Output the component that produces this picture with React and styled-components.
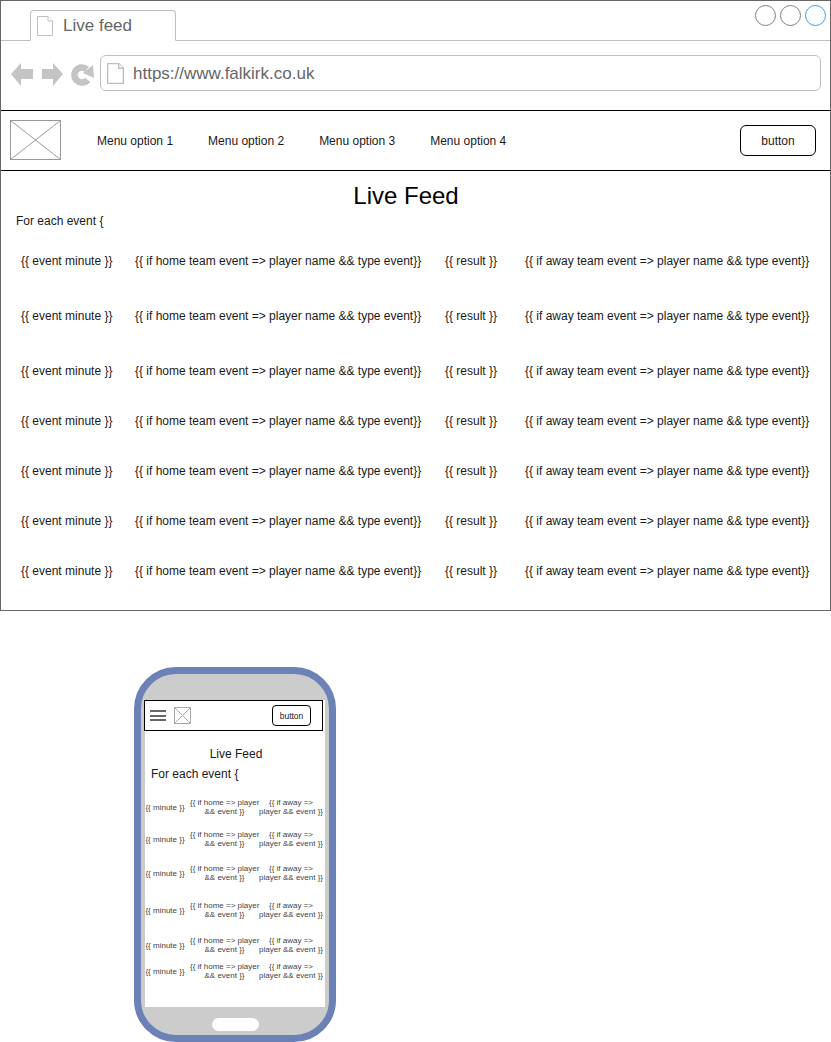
import React from 'react'
import styled, { createGlobalStyle } from 'styled-components'

const GlobalStyle = createGlobalStyle`
  html, body { margin: 0; padding: 0; background: #ffffff; }
  body { font-family: "Liberation Sans", Arial, sans-serif; color: #1a1a1a; height: 1042px; overflow: hidden; }
  * { box-sizing: border-box; }
`

const BrowserWindow = styled.div`
  width: 831px;
  height: 611px;
  border: 1px solid #666666;
  display: flex;
  flex-direction: column;
`
const TabBar = styled.div`
  height: 40px;
  flex: none;
  border-bottom: 1px solid #c0c0c0;
  padding: 9px 4px 0 29px;
  display: flex;
  justify-content: space-between;
  align-items: flex-start;
`
const Tab = styled.div`
  width: 146px;
  height: 31px;
  border: 1px solid #c0c0c0;
  border-bottom: 1px solid #ffffff;
  border-radius: 4px 4px 0 0;
  background: #ffffff;
  padding-left: 6px;
  display: flex;
  align-items: center;
  gap: 10px;
  font-size: 17px;
  color: #666666;
`
const WindowButtons = styled.div`
  display: flex;
  gap: 4px;
  margin-top: -5px;
`
const WindowButton = styled.span`
  width: 21px;
  height: 21px;
  border-radius: 50%;
  border: 1px solid ${(p) => (p.$active ? '#3d9be9' : '#808080')};
`
const AddressRow = styled.div`
  height: 69px;
  flex: none;
  padding: 14px 9px 0 10px;
  display: flex;
  align-items: flex-start;
`
const NavIcons = styled.div`
  width: 89px;
  height: 36px;
  flex: none;
  padding-top: 6px;
  display: flex;
  align-items: flex-start;
`
const UrlField = styled.div`
  flex: 1;
  height: 36px;
  border: 1px solid #c0c0c0;
  border-radius: 6px;
  padding-left: 6px;
  display: flex;
  align-items: center;
  gap: 9px;
  font-size: 17px;
  color: #666666;
`
const UrlText = styled.span`
  padding-top: 2px;
`
const NavBar = styled.div`
  height: 61px;
  flex: none;
  border-top: 1px solid #000000;
  border-bottom: 1px solid #000000;
  padding: 0 14px 0 9px;
  display: flex;
  align-items: center;
`
const NavLogo = styled.div`
  display: flex;
  margin-top: -1px;
`
const Menu = styled.div`
  margin-left: 36px;
  flex: 1;
  display: flex;
  gap: 35px;
  font-size: 12px;
`
const ActionButton = styled.button`
  width: 76px;
  height: 31px;
  background: #ffffff;
  border: 1px solid #000000;
  border-radius: 6px;
  padding: 0;
  font-family: inherit;
  font-size: 12px;
  color: #1a1a1a;
`
const Content = styled.div`
  flex: 1;
  padding-top: 11px;
`
const Heading = styled.h1`
  margin: 0;
  font-size: 24px;
  font-weight: 400;
  line-height: 28px;
  text-align: center;
  padding-right: 19px;
  color: #000000;
`
const EachLabel = styled.div`
  margin: 4px 0 0 15px;
  font-size: 12px;
  line-height: 14px;
`
const FeedList = styled.div`
  margin-top: 26px;
  display: flex;
  flex-direction: column;
`
const FeedRow = styled.div`
  height: ${(p) => p.$height}px;
  display: grid;
  grid-template-columns: 20px 91px 23px 286px 24px 52px 28px 283px;
  font-size: 12px;
  line-height: 14px;
  white-space: nowrap;
`
const FeedCell = styled.span`
  grid-column: ${(p) => p.$col};
`

const Phone = styled.div`
  width: 202px;
  height: 375px;
  margin: 56px 0 0 134px;
  border: 7px solid #6c82b6;
  border-radius: 42px;
  background: #cccccc;
  padding: 26px 4px 0 4px;
`
const PhoneScreen = styled.div`
  height: 307px;
  background: #ffffff;
`
const PhoneNav = styled.div`
  width: 179px;
  height: 31px;
  margin-left: -1px;
  border: 1px solid #000000;
  background: #ffffff;
  padding: 0 11px 0 5px;
  display: flex;
  align-items: center;
`
const Burger = styled.div`
  width: 16px;
  height: 11px;
  flex: none;
  border-top: 2px solid #666666;
  border-bottom: 2px solid #666666;
  display: flex;
  align-items: center;
  &::before {
    content: '';
    display: block;
    width: 100%;
    height: 2px;
    background: #666666;
  }
`
const PhoneLogo = styled.div`
  margin-left: 8px;
  flex: 1;
  display: flex;
`
const PhoneButton = styled.button`
  width: 39px;
  height: 21px;
  background: #ffffff;
  border: 1px solid #000000;
  border-radius: 4px;
  padding: 0;
  font-family: inherit;
  font-size: 8.5px;
  color: #1a1a1a;
`
const PhoneHeading = styled.div`
  margin-top: 16px;
  font-size: 12px;
  line-height: 14px;
  text-align: center;
  padding-left: 2px;
`
const PhoneEachLabel = styled.div`
  margin: 6px 0 0 6px;
  font-size: 12px;
  line-height: 14px;
`
const PhoneList = styled.div`
  margin-top: 17px;
  display: flex;
  flex-direction: column;
`
const PhoneRow = styled.div`
  height: ${(p) => p.$height}px;
  display: grid;
  grid-template-columns: 0 40px 5px 69px 0 64px;
  font-size: 8px;
  line-height: 9px;
  color: #444444;
  text-align: center;
  white-space: nowrap;
`
const PhoneMinute = styled.span`
  grid-column: 2;
  padding-top: 5px;
`
const PhoneCell = styled.span`
  grid-column: ${(p) => p.$col};
`
const HomeKey = styled.div`
  width: 47px;
  height: 13px;
  margin: 11px auto 0;
  border-radius: 7px;
  background: #ffffff;
`

const DocIcon = ({ w, h, stroke = '#c0c0c0', sw = 1 }) => (
  <svg width={w} height={h} viewBox="0 0 16 20" fill="#ffffff" stroke={stroke} strokeWidth={sw}>
    <path d="M.5.5h10.5l4.500 4.500v14.500h-15z" />
    <path d="M11 .5v4.500h4.500" />
  </svg>
)

const PlaceholderLogo = ({ w, h, stroke = '#999999' }) => (
  <svg width={w} height={h} viewBox={`0 0 ${w} ${h}`} fill="#ffffff" stroke={stroke}>
    <rect x=".5" y=".5" width={w - 1} height={h - 1} />
    <path d={`M.5 .5L${w - 0.5} ${h - 0.5}M${w - 0.5} .5L.5 ${h - 0.5}`} />
  </svg>
)

const BrowserArrows = () => (
  <svg width="84" height="28" viewBox="0 0 84 28">
    <path fill="#c4c4c4" d="M0 13L10 2v6h12v10H10v7z" />
    <path fill="#c4c4c4" d="M52 13L42 2v6H31v10h11v7z" />
    <path fill="none" stroke="#c4c4c4" strokeWidth="6.500" d="M75.800 8.300A7.500 7.500 0 1 0 76.700 18.800" />
    <path fill="#c4c4c4" d="M82 4l1 13-11-5z" />
  </svg>
)

const rowHeights = [55, 55, 50, 50, 50, 50, 50]
const phoneRowHeights = [32, 34, 37, 35, 26, 26]

export default function App() {
  return (
    <>
      <GlobalStyle />
      <BrowserWindow>
        <TabBar>
          <Tab>
            <DocIcon w={16} h={20} />
            Live feed
          </Tab>
          <WindowButtons>
            <WindowButton />
            <WindowButton />
            <WindowButton $active />
          </WindowButtons>
        </TabBar>
        <AddressRow>
          <NavIcons>
            <BrowserArrows />
          </NavIcons>
          <UrlField>
            <DocIcon w={17} h={21} sw={1.400} />
            <UrlText>https://www.falkirk.co.uk</UrlText>
          </UrlField>
        </AddressRow>
        <NavBar>
          <NavLogo>
            <PlaceholderLogo w={51} h={40} />
          </NavLogo>
          <Menu>
            <span>Menu option 1</span>
            <span>Menu option 2</span>
            <span>Menu option 3</span>
            <span>Menu option 4</span>
          </Menu>
          <ActionButton>button</ActionButton>
        </NavBar>
        <Content>
          <Heading>Live Feed</Heading>
          <EachLabel>For each event {'{'}</EachLabel>
          <FeedList>
            {rowHeights.map((height, i) => (
              <FeedRow key={i} $height={height}>
                <FeedCell $col={2}>{'{{ event minute }}'}</FeedCell>
                <FeedCell $col={4}>{'{{ if home team event => player name && type event}}'}</FeedCell>
                <FeedCell $col={6}>{'{{ result }}'}</FeedCell>
                <FeedCell $col={8}>{'{{ if away team event => player name && type event}}'}</FeedCell>
              </FeedRow>
            ))}
          </FeedList>
        </Content>
      </BrowserWindow>

      <Phone>
        <PhoneScreen>
          <PhoneNav>
            <Burger />
            <PhoneLogo>
              <PlaceholderLogo w={17} h={17} stroke="#aaaaaa" />
            </PhoneLogo>
            <PhoneButton>button</PhoneButton>
          </PhoneNav>
          <PhoneHeading>Live Feed</PhoneHeading>
          <PhoneEachLabel>For each event {'{'}</PhoneEachLabel>
          <PhoneList>
            {phoneRowHeights.map((height, i) => (
              <PhoneRow key={i} $height={height}>
                <PhoneMinute>{'{{ minute }}'}</PhoneMinute>
                <PhoneCell $col={4}>{'{{ if home => player'}<br />{'&& event }}'}</PhoneCell>
                <PhoneCell $col={6}>{'{{ if away =>'}<br />{'player && event }}'}</PhoneCell>
              </PhoneRow>
            ))}
          </PhoneList>
        </PhoneScreen>
        <HomeKey />
      </Phone>
    </>
  )
}
